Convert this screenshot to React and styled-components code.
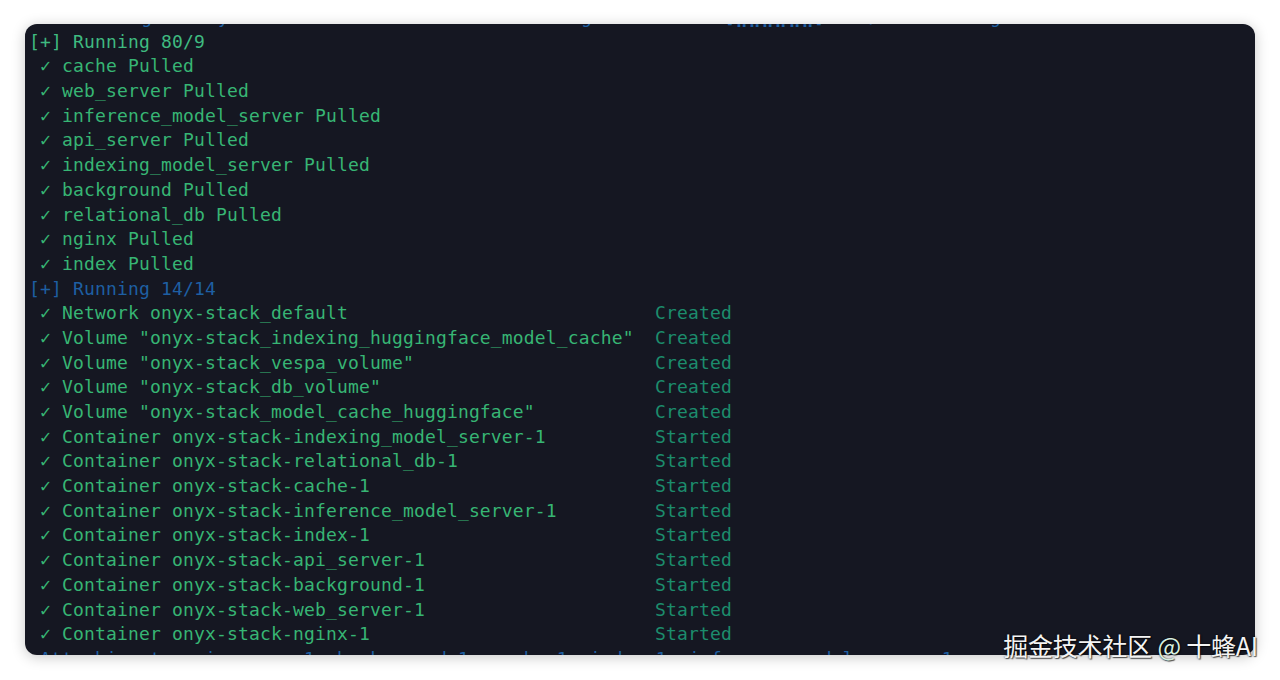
import React from 'react';
import styled, { createGlobalStyle } from 'styled-components';

const GlobalStyle = createGlobalStyle`
  html, body {
    margin: 0;
    padding: 0;
    background: #ffffff;
  }
  #root {
    width: 1280px;
    height: 680px;
  }
`;

const Page = styled.div`
  box-sizing: border-box;
  width: 1280px;
  height: 680px;
  padding: 24px 25px 25px 25px;
  background: #ffffff;
  position: relative;
`;

const Terminal = styled.div`
  position: relative;
  height: 100%;
  background: #151722;
  border-radius: 12px;
  overflow: hidden;
  box-shadow: 0 2px 14px rgba(0, 0, 0, 0.22);
`;

const Lines = styled.div`
  margin-top: -19px;
  padding-left: 4px;
  font-family: "DejaVu Sans Mono", "Liberation Mono", monospace;
  font-size: 18px;
  letter-spacing: 0.16px;
  line-height: 24.7px;
  white-space: pre;
`;

const Line = styled.div`
  height: 24.7px;
  color: ${p => (p.$tone === 'blue' ? '#1e5fa3' : p.$tone === 'bright' ? '#3fba80' : '#37b574')};
`;

const Row = styled.div`
  display: grid;
  grid-template-columns: 626px auto;
  height: 24.7px;
  color: #37b574;
`;

const Status = styled.span`
  color: #1c8c6c;
`;

const Watermark = styled.div`
  position: absolute;
  right: 22px;
  bottom: 21px;
  font-family: "Noto Sans CJK SC", "Noto Sans", sans-serif;
  font-size: 25px;
  line-height: 28px;
  color: #f4f4f4;
  letter-spacing: -0.2px;
  text-shadow: 0 0 2px rgba(0, 0, 0, 0.8), 1px 1px 1px rgba(0, 0, 0, 0.6);
`;

const At = styled.span`
  color: #d8efe0;
`;

const pulled = [
  'cache',
  'web_server',
  'inference_model_server',
  'api_server',
  'indexing_model_server',
  'background',
  'relational_db',
  'nginx',
  'index',
];

const created = [
  'Network onyx-stack_default',
  'Volume "onyx-stack_indexing_huggingface_model_cache"',
  'Volume "onyx-stack_vespa_volume"',
  'Volume "onyx-stack_db_volume"',
  'Volume "onyx-stack_model_cache_huggingface"',
];

const started = [
  'indexing_model_server',
  'relational_db',
  'cache',
  'inference_model_server',
  'index',
  'api_server',
  'background',
  'web_server',
  'nginx',
];

export default function App() {
  return (
    <>
      <GlobalStyle />
      <Page>
        <Terminal>
          <Lines>
            <Line $tone="blue">{'  ⠿ Pulling fs layer   sha256:9e3ea8720c6d  Waiting     0.0s   [⣿⣿⣀⣀⣀⣀]  0B/0B  Pulling'}</Line>
            <Line $tone="bright">[+] Running 80/9</Line>
            {pulled.map(name => (
              <Line key={name}>{` ✓ ${name} Pulled`}</Line>
            ))}
            <Line $tone="blue">[+] Running 14/14</Line>
            {created.map(name => (
              <Row key={name}>
                <span>{` ✓ ${name}`}</span>
                <Status>Created</Status>
              </Row>
            ))}
            {started.map(name => (
              <Row key={name}>
                <span>{` ✓ Container onyx-stack-${name}-1`}</span>
                <Status>Started</Status>
              </Row>
            ))}
            <Line $tone="blue">{' Attaching to api_server-1, background-1, cache-1, index-1, inference_model_server-1'}</Line>
          </Lines>
        </Terminal>
        <Watermark>
          掘金技术社区 <At>@</At> 十蜂AI
        </Watermark>
      </Page>
    </>
  );
}
